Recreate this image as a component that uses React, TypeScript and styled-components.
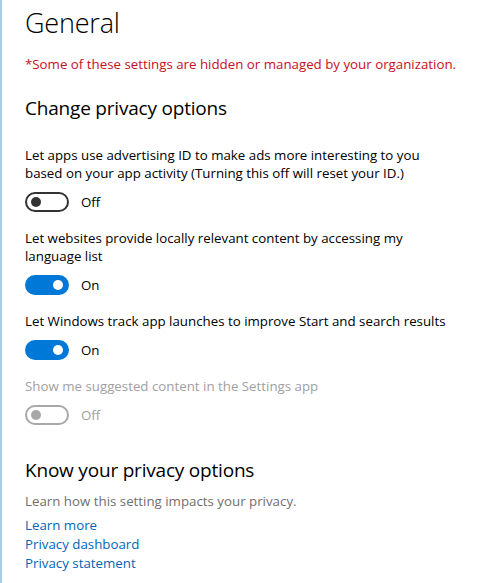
import styled, { createGlobalStyle } from "styled-components"

const Globalstyle = createGlobalStyle`
  html, body {
    margin: 0;
    padding: 0;
    background: #ffffff;
  }
  body {
    font-family: "Open Sans", "Noto Sans", "Liberation Sans", sans-serif;
    color: #000000;
  }
`

interface Setting {
  label: string;
  on: boolean;
  disabled?: boolean;
}

const settings: Setting[] = [
  {
    label: "Let apps use advertising ID to make ads more interesting to you based on your app activity (Turning this off will reset your ID.)",
    on: false,
  },
  {
    label: "Let websites provide locally relevant content by accessing my language list",
    on: true,
  },
  {
    label: "Let Windows track app launches to improve Start and search results",
    on: true,
  },
  {
    label: "Show me suggested content in the Settings app",
    on: false,
    disabled: true,
  },
]

function App() {
  return (
    <Page>
      <Globalstyle />
      <Title>General</Title>
      <Notice>*Some of these settings are hidden or managed by your organization.</Notice>
      <Heading>Change privacy options</Heading>
      <SettingList>
        {settings.map((s) => (
          <SettingItem key={s.label}>
            <Label $disabled={s.disabled}>{s.label}</Label>
            <ToggleRow>
              <Toggle $on={s.on} $disabled={s.disabled}>
                <Knob $on={s.on} $disabled={s.disabled} />
              </Toggle>
              <State $disabled={s.disabled}>{s.on ? "On" : "Off"}</State>
            </ToggleRow>
          </SettingItem>
        ))}
      </SettingList>
      <Heading $top={32}>Know your privacy options</Heading>
      <Hint>Learn how this setting impacts your privacy.</Hint>
      <Links>
        <Link href="#">Learn more</Link>
        <Link href="#">Privacy dashboard</Link>
        <Link href="#">Privacy statement</Link>
      </Links>
    </Page>
  )
}

export default App

const Page = styled.div`
  min-height: 583px;
  box-sizing: border-box;
  border-left: 2px solid #a8cfe6;
  padding: 4px 16px 0 23px;
`

const Title = styled.h1`
  margin: 0;
  font-size: 27px;
  font-weight: 300;
  line-height: 38px;
  letter-spacing: -0.2px;
`

const Notice = styled.p`
  margin: 13px 0 0;
  font-size: 13.3px;
  line-height: 18px;
  color: #c50f1f;
`

const Heading = styled.h2<{ $top?: number }>`
  margin: ${(p) => p.$top ?? 22}px 0 0;
  font-size: 19px;
  font-weight: 400;
  line-height: 26px;
  letter-spacing: -0.2px;
`

const SettingList = styled.div`
  display: flex;
  flex-direction: column;
  gap: 17px;
  margin-top: 25px;
`

const SettingItem = styled.div`
  display: flex;
  flex-direction: column;
  gap: 10px;
`

const Label = styled.div<{ $disabled?: boolean }>`
  font-size: 13.3px;
  line-height: 18px;
  color: ${(p) => (p.$disabled ? "#a0a0a0" : "#000000")};
  max-width: 432px;
`

const ToggleRow = styled.div`
  display: flex;
  align-items: center;
  gap: 12px;
  height: 20px;
`

const Toggle = styled.div<{ $on: boolean; $disabled?: boolean }>`
  box-sizing: border-box;
  width: 44px;
  height: 20px;
  border-radius: 10px;
  display: flex;
  align-items: center;
  justify-content: ${(p) => (p.$on ? "flex-end" : "flex-start")};
  padding: 0 4px;
  background: ${(p) => (p.$on ? "#0078d7" : "transparent")};
  border: 2px solid
    ${(p) => (p.$on ? "#0078d7" : p.$disabled ? "#a8a8a8" : "#333333")};
`

const Knob = styled.div<{ $on: boolean; $disabled?: boolean }>`
  width: 10px;
  height: 10px;
  border-radius: 50%;
  background: ${(p) => (p.$on ? "#ffffff" : p.$disabled ? "#a8a8a8" : "#333333")};
`

const State = styled.span<{ $disabled?: boolean }>`
  font-size: 13.3px;
  color: ${(p) => (p.$disabled ? "#a0a0a0" : "#000000")};
`

const Hint = styled.p`
  margin: 9px 0 0;
  font-size: 13.3px;
  line-height: 18px;
  color: #707070;
`

const Links = styled.div`
  display: flex;
  flex-direction: column;
  margin-top: 6px;
`

const Link = styled.a`
  font-size: 13.3px;
  line-height: 19px;
  color: #0067b8;
  text-decoration: none;
  align-self: flex-start;
`
